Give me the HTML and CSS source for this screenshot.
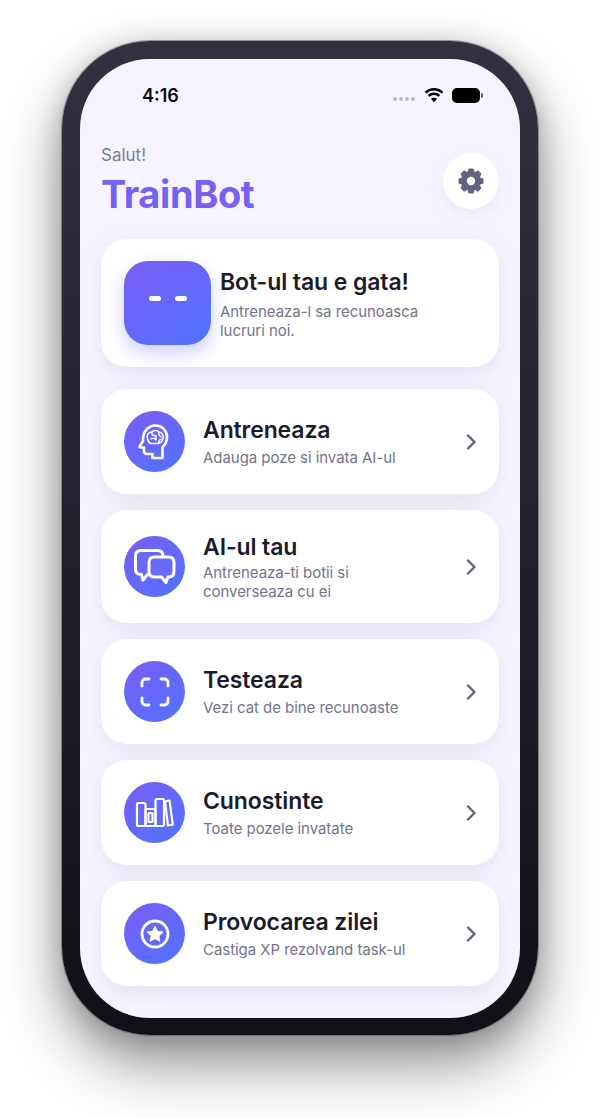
FILE: index.html
```html
<!DOCTYPE html>
<html lang="ro">
<head>
<meta charset="utf-8">
<title>TrainBot</title>
<link rel="stylesheet" href="styles.css">
</head>
<body>
<div class="phone">
  <main class="screen">
    <div class="status">
      <span class="time">4:16</span>
      <div class="status-icons">
        <span class="signal"><i></i><i></i><i></i><i></i></span>
        <svg class="wifi" width="20" height="16" viewBox="0 0 20 16"><path class="wifi-arc" d="M1.500 5.600C6.300 1 13.700 1 18.500 5.600M4.600 8.800c3-2.800 7.800-2.800 10.800 0"/><path class="wifi-dot" d="M10 15.200 6.900 11.700c1.800-1.300 4.400-1.300 6.200 0z"/></svg>
        <span class="battery"></span>
      </div>
    </div>
    <header class="top">
      <div>
        <p class="hello">Salut!</p>
        <h1 class="brand">TrainBot</h1>
      </div>
      <button class="gear" aria-label="Setari">
        <svg width="28" height="28" viewBox="0 0 28 28"><g class="gear-teeth"><rect x="11" y="1.500" width="6" height="25" rx="1.500"/><rect x="11" y="1.500" width="6" height="25" rx="1.500" transform="rotate(45 14 14)"/><rect x="11" y="1.500" width="6" height="25" rx="1.500" transform="rotate(90 14 14)"/><rect x="11" y="1.500" width="6" height="25" rx="1.500" transform="rotate(135 14 14)"/></g><circle class="gear-ring" cx="14" cy="14" r="7.200"/></svg>
      </button>
    </header>

    <section class="card hero">
      <div class="bot"><span></span><span></span></div>
      <div class="hero-text">
        <h2>Bot-ul tau e gata!</h2>
        <p>Antreneaza-l sa recunoasca lucruri noi.</p>
      </div>
    </section>

    <a class="card row">
      <div class="disc">
        <svg width="46" height="46" viewBox="0 0 46 46"><path class="line head" d="M20.500 39v-4h-5.500c-2 0-3-1-3-3v-3.500H8.500c-.8 0-1.100-.6-.8-1.200l3.300-5.300C10.500 13 16 6.500 23.500 6.500 30 6.500 35 11.500 35 18c0 4.500-1.800 8-4.500 10v11z"/><path class="thin" d="M15.500 20c-1.500-3.500 1-7 4-7 2.200-2.200 6-2 7.500 0 3 .2 5 3 4 6.500-.4 2.600-2.300 4.500-5 5H19c-1.800-.4-3-2.400-3.500-4.500zM20 13.500c-.5 2 1 3.500 3.500 3M24 16.500V21M19 20c1.500-1.200 3.500-1 4.500.5M27 13.500c-.8 2 .3 3.500 2 4M27 24.500c-.7-2 0-3.700 2-4.200"/></svg>
      </div>
      <div class="row-text"><h3>Antreneaza</h3><p>Adauga poze si invata AI-ul</p></div>
      <svg class="chev" width="12" height="18" viewBox="0 0 12 18"><path d="M3 2.500 9.500 9 3 15.500"/></svg>
    </a>

    <a class="card row">
      <div class="disc">
        <svg width="46" height="46" viewBox="0 0 46 46"><path class="bubble" d="M9 6.500h16.500c3.500 0 5.500 2 5.500 5.500v13c0 3.500-2 5.500-5.500 5.500H15.500L11 36l-1.500-5.500H9c-3.500 0-5.500-2-5.500-5.500V12c0-3.500 2-5.500 5.500-5.500z"/><path class="bubble" d="M22.500 13h14c3.500 0 5.500 2 5.500 5.500v9c0 3.500-2 5.500-5.500 5.500h-.5l-2 5.500-4.500-5.500h-7c-3.500 0-5.500-2-5.500-5.500v-9c0-3.500 2-5.500 5.500-5.500z"/></svg>
      </div>
      <div class="row-text"><h3>AI-ul tau</h3><p>Antreneaza-ti botii si<br>converseaza cu ei</p></div>
      <svg class="chev" width="12" height="18" viewBox="0 0 12 18"><path d="M3 2.500 9.500 9 3 15.500"/></svg>
    </a>

    <a class="card row">
      <div class="disc">
        <svg width="46" height="46" viewBox="0 0 46 46"><path class="line" d="M10 17v-3.500c0-2 1.500-3.500 3.500-3.500H17M29 10h3.500c2 0 3.500 1.500 3.500 3.500V17M36 29v3.500c0 2-1.500 3.500-3.500 3.500H29M17 36h-3.500c-2 0-3.500-1.500-3.500-3.500V29"/></svg>
      </div>
      <div class="row-text"><h3>Testeaza</h3><p>Vezi cat de bine recunoaste</p></div>
      <svg class="chev" width="12" height="18" viewBox="0 0 12 18"><path d="M3 2.500 9.500 9 3 15.500"/></svg>
    </a>

    <a class="card row">
      <div class="disc">
        <svg width="46" height="46" viewBox="0 0 46 46"><g class="line thinner"><rect x="5" y="13" width="8.500" height="23" rx="1.500"/><rect x="13.500" y="19" width="10" height="17" rx="1"/><rect x="16.500" y="23" width="4" height="9" rx=".5"/><rect x="23.500" y="9" width="8.500" height="27" rx="1.500"/><path d="M33 11.500l4.500-.9 3.300 24-4.800.9z"/></g></svg>
      </div>
      <div class="row-text"><h3>Cunostinte</h3><p>Toate pozele invatate</p></div>
      <svg class="chev" width="12" height="18" viewBox="0 0 12 18"><path d="M3 2.500 9.500 9 3 15.500"/></svg>
    </a>

    <a class="card row">
      <div class="disc">
        <svg width="46" height="46" viewBox="0 0 46 46"><circle class="line" cx="23" cy="23" r="13"/><path class="fill" d="m23 15.500 2.300 4.800 5.300.7-3.900 3.700 1 5.300-4.700-2.600-4.700 2.600 1-5.300-3.900-3.700 5.300-.7z"/></svg>
      </div>
      <div class="row-text"><h3>Provocarea zilei</h3><p>Castiga XP rezolvand task-ul</p></div>
      <svg class="chev" width="12" height="18" viewBox="0 0 12 18"><path d="M3 2.500 9.500 9 3 15.500"/></svg>
    </a>
  </main>
</div>
</body>
</html>
```
FILE: styles.css
```css
* { box-sizing: border-box; }
html, body { margin: 0; height: 1118px; overflow: hidden; background: #fff; }
body { font-family: Inter, "Liberation Sans", sans-serif; padding-top: 41px; }
h1, h2, h3, p { margin: 0; }

.phone {
  width: 476px; height: 994px; margin: 0 auto; padding: 18px 18px 17px;
  border-radius: 88px;
  background: linear-gradient(180deg, #33303f 0%, #24222e 45%, #111016 100%);
  box-shadow: 0 0 0 1px rgba(90,88,105,.55), 0 30px 60px rgba(0,0,0,.42), 0 4px 30px rgba(0,0,0,.2);
}
.screen {
  height: 100%; border-radius: 70px; overflow: hidden;
  background: #f6f5ff; padding: 0 21px;
}

.status { display: flex; justify-content: space-between; align-items: center; height: 22px; margin-top: 25px; padding: 0 16px 0 41px; }
.time { font-size: 18px; font-weight: 600; color: #0b0b10; }
.status-icons { display: flex; align-items: center; gap: 8px; }
.signal { display: flex; gap: 2px; margin-top: 8px; margin-right: 1px; }
.signal i { width: 4px; height: 4px; border-radius: 50%; background: #b9b8c4; }
.wifi-arc { fill: none; stroke: #000; stroke-width: 2.500; }
.wifi-dot { fill: #000; }
.battery { position: relative; width: 28px; height: 15px; border-radius: 5px; background: #000; margin-right: 3px; }
.battery::after { content: ""; position: absolute; right: -3px; top: 5px; width: 2px; height: 5px; border-radius: 0 2px 2px 0; background: #555; }

.top { display: flex; justify-content: space-between; align-items: flex-start; margin-top: 40px; height: 80px; }
.hello { font-size: 17px; line-height: 21px; color: #7e7c92; margin-top: -1px; }
.brand { font-size: 38px; line-height: 46px; font-weight: 700; letter-spacing: -.4px; color: #7561f2; margin-top: 5px; }
.gear { width: 56px; height: 56px; margin-top: 7px; border: 0; padding: 0; border-radius: 50%; background: #fff; display: flex; align-items: center; justify-content: center; box-shadow: 0 6px 16px rgba(90,80,160,.08); }
.gear-teeth rect { fill: #636283; }
.gear-ring { fill: #fff; stroke: #636283; stroke-width: 6; }

.card { background: #fff; border-radius: 26px; box-shadow: 0 8px 26px rgba(60,55,110,.1); display: flex; align-items: center; }
.hero { height: 128px; margin-top: 13px; margin-bottom: 22px; padding-left: 23px; padding-right: 20px; }
.bot { width: 87px; height: 84px; border-radius: 24px; flex: none; display: flex; align-items: center; justify-content: center; gap: 14px; background: linear-gradient(145deg, #7b5cf6 0%, #4f74ff 100%); box-shadow: 0 8px 18px rgba(90,80,240,.28); }
.bot span { width: 12px; height: 5px; border-radius: 2.500px; background: #fff; margin-bottom: 10px; }
.hero-text { margin-left: 9px; padding-top: 3px; }
.hero-text h2 { font-size: 23px; line-height: 27px; font-weight: 600; color: #1c1b2b; letter-spacing: -.1px; }
.hero-text p { font-size: 15px; line-height: 19px; color: #75738a; margin-top: 6px; max-width: 225px; letter-spacing: -.05px; }

.row { min-height: 105px; margin-bottom: 16px; padding: 0 22px 0 23px; }
.disc { width: 61px; height: 61px; border-radius: 50%; flex: none; display: flex; align-items: center; justify-content: center; background: linear-gradient(145deg, #7b5cf6 0%, #4f74ff 100%); }
.row-text { flex: 1; margin-left: 18px; }
.row-text h3 { font-size: 23px; line-height: 27px; font-weight: 600; color: #1c1b2b; letter-spacing: -.1px; }
.row-text p { font-size: 15px; line-height: 19px; color: #75738a; margin-top: 4px; letter-spacing: -.05px; }
.row:nth-of-type(2) { min-height: 113px; }
.row:nth-of-type(2) h3 { margin-top: 2px; }
.row:nth-of-type(2) p { margin-top: 2px; }
.chev { fill: none; stroke: #63627a; stroke-width: 2.400; stroke-linecap: round; stroke-linejoin: round; flex: none; }

.line { fill: none; stroke: #fff; stroke-width: 2.800; stroke-linecap: round; stroke-linejoin: round; }
.head { stroke-width: 2.600; }
.thin { fill: none; stroke: #fff; stroke-width: 1.500; stroke-linecap: round; stroke-linejoin: round; }
.thinner { stroke-width: 2.200; }
.fill { fill: #fff; stroke: #fff; stroke-width: 1.200; stroke-linejoin: round; }
.bubble { fill: #6a6afa; stroke: #fff; stroke-width: 3; stroke-linejoin: round; }
```
